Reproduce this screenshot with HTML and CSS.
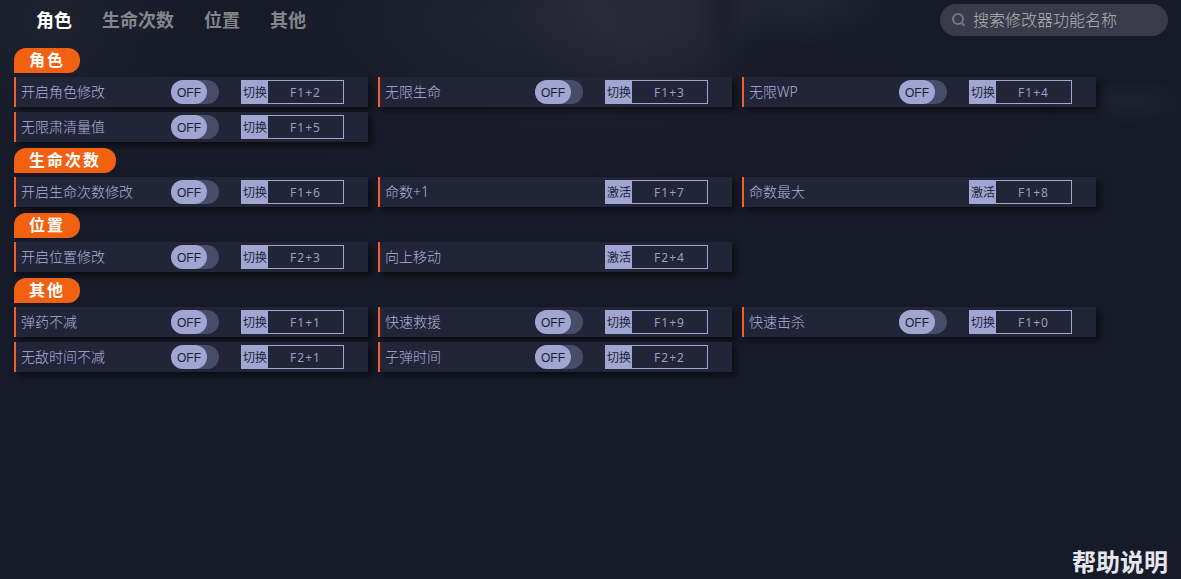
FILE: index.html
```html
<!DOCTYPE html>
<html lang="zh-CN">
<head>
    <meta charset="UTF-8">
    <meta name="viewport" content="width=device-width, initial-scale=1.0">
    <title>修改器</title>
    <link rel="stylesheet" href="styles.css">
</head>
<body>
    <!-- 顶部导航 -->
    <header class="header">
        <nav class="tabs">
            <a class="tab active" href="#role">角色</a>
            <a class="tab" href="#life">生命次数</a>
            <a class="tab" href="#position">位置</a>
            <a class="tab" href="#other">其他</a>
        </nav>
        <label class="search" for="search">
            <svg class="search-icon" viewBox="0 0 14 14" aria-hidden="true">
                <circle cx="6" cy="6" r="5"/>
                <path d="M9.8 9.8 L12.4 12.8"/>
            </svg>
            <input type="text" id="search" placeholder="搜索修改器功能名称">
        </label>
    </header>

    <!-- 功能列表 -->
    <main class="content">
        <section class="group" id="role">
            <h2 class="group-title">角色</h2>
            <div class="cards">
                <div class="card">
                    <label class="name" for="role1">开启角色修改</label>
                    <label class="switch"><input type="checkbox" id="role1"><span class="knob">OFF</span></label>
                    <div class="hotkey"><button type="button">切换</button><input type="text" value="F1+2" aria-label="开启角色修改" readonly></div>
                </div>
                <div class="card">
                    <label class="name" for="role2">无限生命</label>
                    <label class="switch"><input type="checkbox" id="role2"><span class="knob">OFF</span></label>
                    <div class="hotkey"><button type="button">切换</button><input type="text" value="F1+3" aria-label="无限生命" readonly></div>
                </div>
                <div class="card">
                    <label class="name" for="role3">无限WP</label>
                    <label class="switch"><input type="checkbox" id="role3"><span class="knob">OFF</span></label>
                    <div class="hotkey"><button type="button">切换</button><input type="text" value="F1+4" aria-label="无限WP" readonly></div>
                </div>
                <div class="card">
                    <label class="name" for="role4">无限肃清量值</label>
                    <label class="switch"><input type="checkbox" id="role4"><span class="knob">OFF</span></label>
                    <div class="hotkey"><button type="button">切换</button><input type="text" value="F1+5" aria-label="无限肃清量值" readonly></div>
                </div>
            </div>
        </section>

        <section class="group" id="life">
            <h2 class="group-title">生命次数</h2>
            <div class="cards">
                <div class="card">
                    <label class="name" for="life1">开启生命次数修改</label>
                    <label class="switch"><input type="checkbox" id="life1"><span class="knob">OFF</span></label>
                    <div class="hotkey"><button type="button">切换</button><input type="text" value="F1+6" aria-label="开启生命次数修改" readonly></div>
                </div>
                <div class="card">
                    <label class="name" for="life2">命数+1</label>
                    <div class="hotkey"><button type="button">激活</button><input type="text" id="life2" value="F1+7" readonly></div>
                </div>
                <div class="card">
                    <label class="name" for="life3">命数最大</label>
                    <div class="hotkey"><button type="button">激活</button><input type="text" id="life3" value="F1+8" readonly></div>
                </div>
            </div>
        </section>

        <section class="group" id="position">
            <h2 class="group-title">位置</h2>
            <div class="cards">
                <div class="card">
                    <label class="name" for="position1">开启位置修改</label>
                    <label class="switch"><input type="checkbox" id="position1"><span class="knob">OFF</span></label>
                    <div class="hotkey"><button type="button">切换</button><input type="text" value="F2+3" aria-label="开启位置修改" readonly></div>
                </div>
                <div class="card">
                    <label class="name" for="position2">向上移动</label>
                    <div class="hotkey"><button type="button">激活</button><input type="text" id="position2" value="F2+4" readonly></div>
                </div>
            </div>
        </section>

        <section class="group" id="other">
            <h2 class="group-title">其他</h2>
            <div class="cards">
                <div class="card">
                    <label class="name" for="other1">弹药不减</label>
                    <label class="switch"><input type="checkbox" id="other1"><span class="knob">OFF</span></label>
                    <div class="hotkey"><button type="button">切换</button><input type="text" value="F1+1" aria-label="弹药不减" readonly></div>
                </div>
                <div class="card">
                    <label class="name" for="other2">快速救援</label>
                    <label class="switch"><input type="checkbox" id="other2"><span class="knob">OFF</span></label>
                    <div class="hotkey"><button type="button">切换</button><input type="text" value="F1+9" aria-label="快速救援" readonly></div>
                </div>
                <div class="card">
                    <label class="name" for="other3">快速击杀</label>
                    <label class="switch"><input type="checkbox" id="other3"><span class="knob">OFF</span></label>
                    <div class="hotkey"><button type="button">切换</button><input type="text" value="F1+0" aria-label="快速击杀" readonly></div>
                </div>
                <div class="card">
                    <label class="name" for="other4">无敌时间不减</label>
                    <label class="switch"><input type="checkbox" id="other4"><span class="knob">OFF</span></label>
                    <div class="hotkey"><button type="button">切换</button><input type="text" value="F2+1" aria-label="无敌时间不减" readonly></div>
                </div>
                <div class="card">
                    <label class="name" for="other5">子弹时间</label>
                    <label class="switch"><input type="checkbox" id="other5"><span class="knob">OFF</span></label>
                    <div class="hotkey"><button type="button">切换</button><input type="text" value="F2+2" aria-label="子弹时间" readonly></div>
                </div>
            </div>
        </section>
    </main>

    <!-- 底部帮助 -->
    <footer class="footer">
        <a class="help" href="#help">帮助说明</a>
    </footer>
</body>
</html>
```
FILE: styles.css
```css
/* 全局样式 */
* {
    box-sizing: border-box;
}

body {
    margin: 0;
    min-height: 100vh;
    display: flex;
    flex-direction: column;
    font-family: "Noto Sans", "Noto Sans CJK SC", sans-serif;
    color: #adb1d8;
    background-color: #171a28;
    /* 顶部的暗色光影 */
    background-image:
        radial-gradient(ellipse 24px 50px at 722px 8px, rgba(20, 22, 36, 0.5), transparent),
        radial-gradient(ellipse 130px 100px at 640px 0, rgba(56, 56, 68, 0.4) 40%, transparent),
        radial-gradient(ellipse 280px 130px at 540px 20px, rgba(42, 46, 56, 0.5), transparent),
        radial-gradient(ellipse 110px 50px at 800px 0, rgba(42, 47, 54, 0.6), transparent),
        radial-gradient(ellipse 80px 24px at 1130px 102px, rgba(42, 44, 56, 0.4), transparent),
        radial-gradient(ellipse 160px 140px at 50px 20px, rgba(36, 42, 54, 0.5), transparent),
        radial-gradient(ellipse 400px 90px at 700px 130px, rgba(30, 28, 46, 0.6), transparent);
    background-repeat: no-repeat;
}

input,
button {
    font-family: inherit;
    margin: 0;
    padding: 0;
    border: none;
    outline: none;
}

a {
    text-decoration: none;
}

/* 顶部导航 */
.header {
    display: flex;
    justify-content: space-between;
    align-items: center;
    height: 40px;
    padding: 0 13px 0 36px;
}

.tabs {
    display: flex;
    gap: 30px;
}

.tab {
    font-size: 18px;
    font-weight: bold;
    line-height: 24px;
    color: #84868c;
}

.tab.active {
    color: #fff;
}

/* 搜索框 */
.search {
    display: flex;
    align-items: center;
    gap: 7px;
    width: 228px;
    height: 32px;
    padding: 0 12px;
    border-radius: 16px;
    background: #3a3b4a;
}

.search-icon {
    width: 14px;
    height: 14px;
    flex: none;
    fill: none;
    stroke: #74768c;
    stroke-width: 2;
}

.search input {
    flex: 1;
    min-width: 0;
    font-size: 16px;
    font-weight: 300;
    line-height: 24px;
    color: #fff;
    background: transparent;
}

.search input::placeholder {
    color: #b4b4b6;
}

/* 功能分组 */
.content {
    display: flex;
    flex-direction: column;
    gap: 6px;
    padding: 8px 14px;
}

.group-title {
    width: fit-content;
    margin: 0 0 4px;
    padding: 0 15px;
    border-radius: 12px 12px 12px 0;
    font-size: 16px;
    line-height: 25px;
    letter-spacing: 2px;
    color: #fff;
    background: #f26112;
}

.cards {
    display: grid;
    grid-template-columns: repeat(auto-fill, 354px);
    gap: 5px 10px;
}

.card {
    display: flex;
    align-items: center;
    height: 30px;
    padding: 0 24px 0 5px;
    border-left: 2px solid #f2602a;
    background: #222438;
    box-shadow: 4px 4px 6px rgba(0, 0, 0, 0.5);
}

.name {
    flex: 1;
    font-size: 14px;
    font-weight: 300;
    line-height: 20px;
}

/* 开关 */
.switch {
    width: 48px;
    height: 24px;
    margin-right: 22px;
    border-radius: 12px;
    background: #474c69;
    cursor: pointer;
}

.switch input {
    position: absolute;
    opacity: 0;
}

.knob {
    display: block;
    width: 36px;
    height: 24px;
    padding-top: 1px;
    border-radius: 12px;
    font-family: "Liberation Sans", sans-serif;
    font-size: 12px;
    line-height: 24px;
    text-align: center;
    color: #1c1e30;
    background: #a0a5d2;
}

.switch input:checked + .knob {
    margin-left: auto;
}

/* 热键 */
.hotkey {
    display: flex;
    width: 103px;
    height: 24px;
    border: 1px solid #a3a7cf;
}

.hotkey button {
    width: 26px;
    font-size: 12px;
    color: #222438;
    background: #a0a5d2;
    cursor: pointer;
}

.hotkey input {
    flex: 1;
    min-width: 0;
    font-size: 12px;
    letter-spacing: 1px;
    text-align: center;
    color: #9a9ec4;
    background: transparent;
}

/* 底部帮助 */
.footer {
    display: flex;
    justify-content: flex-end;
    margin-top: auto;
    padding: 0 13px;
}

.help {
    font-size: 24px;
    font-weight: bold;
    line-height: 34px;
    color: #e6e7ee;
}
```
